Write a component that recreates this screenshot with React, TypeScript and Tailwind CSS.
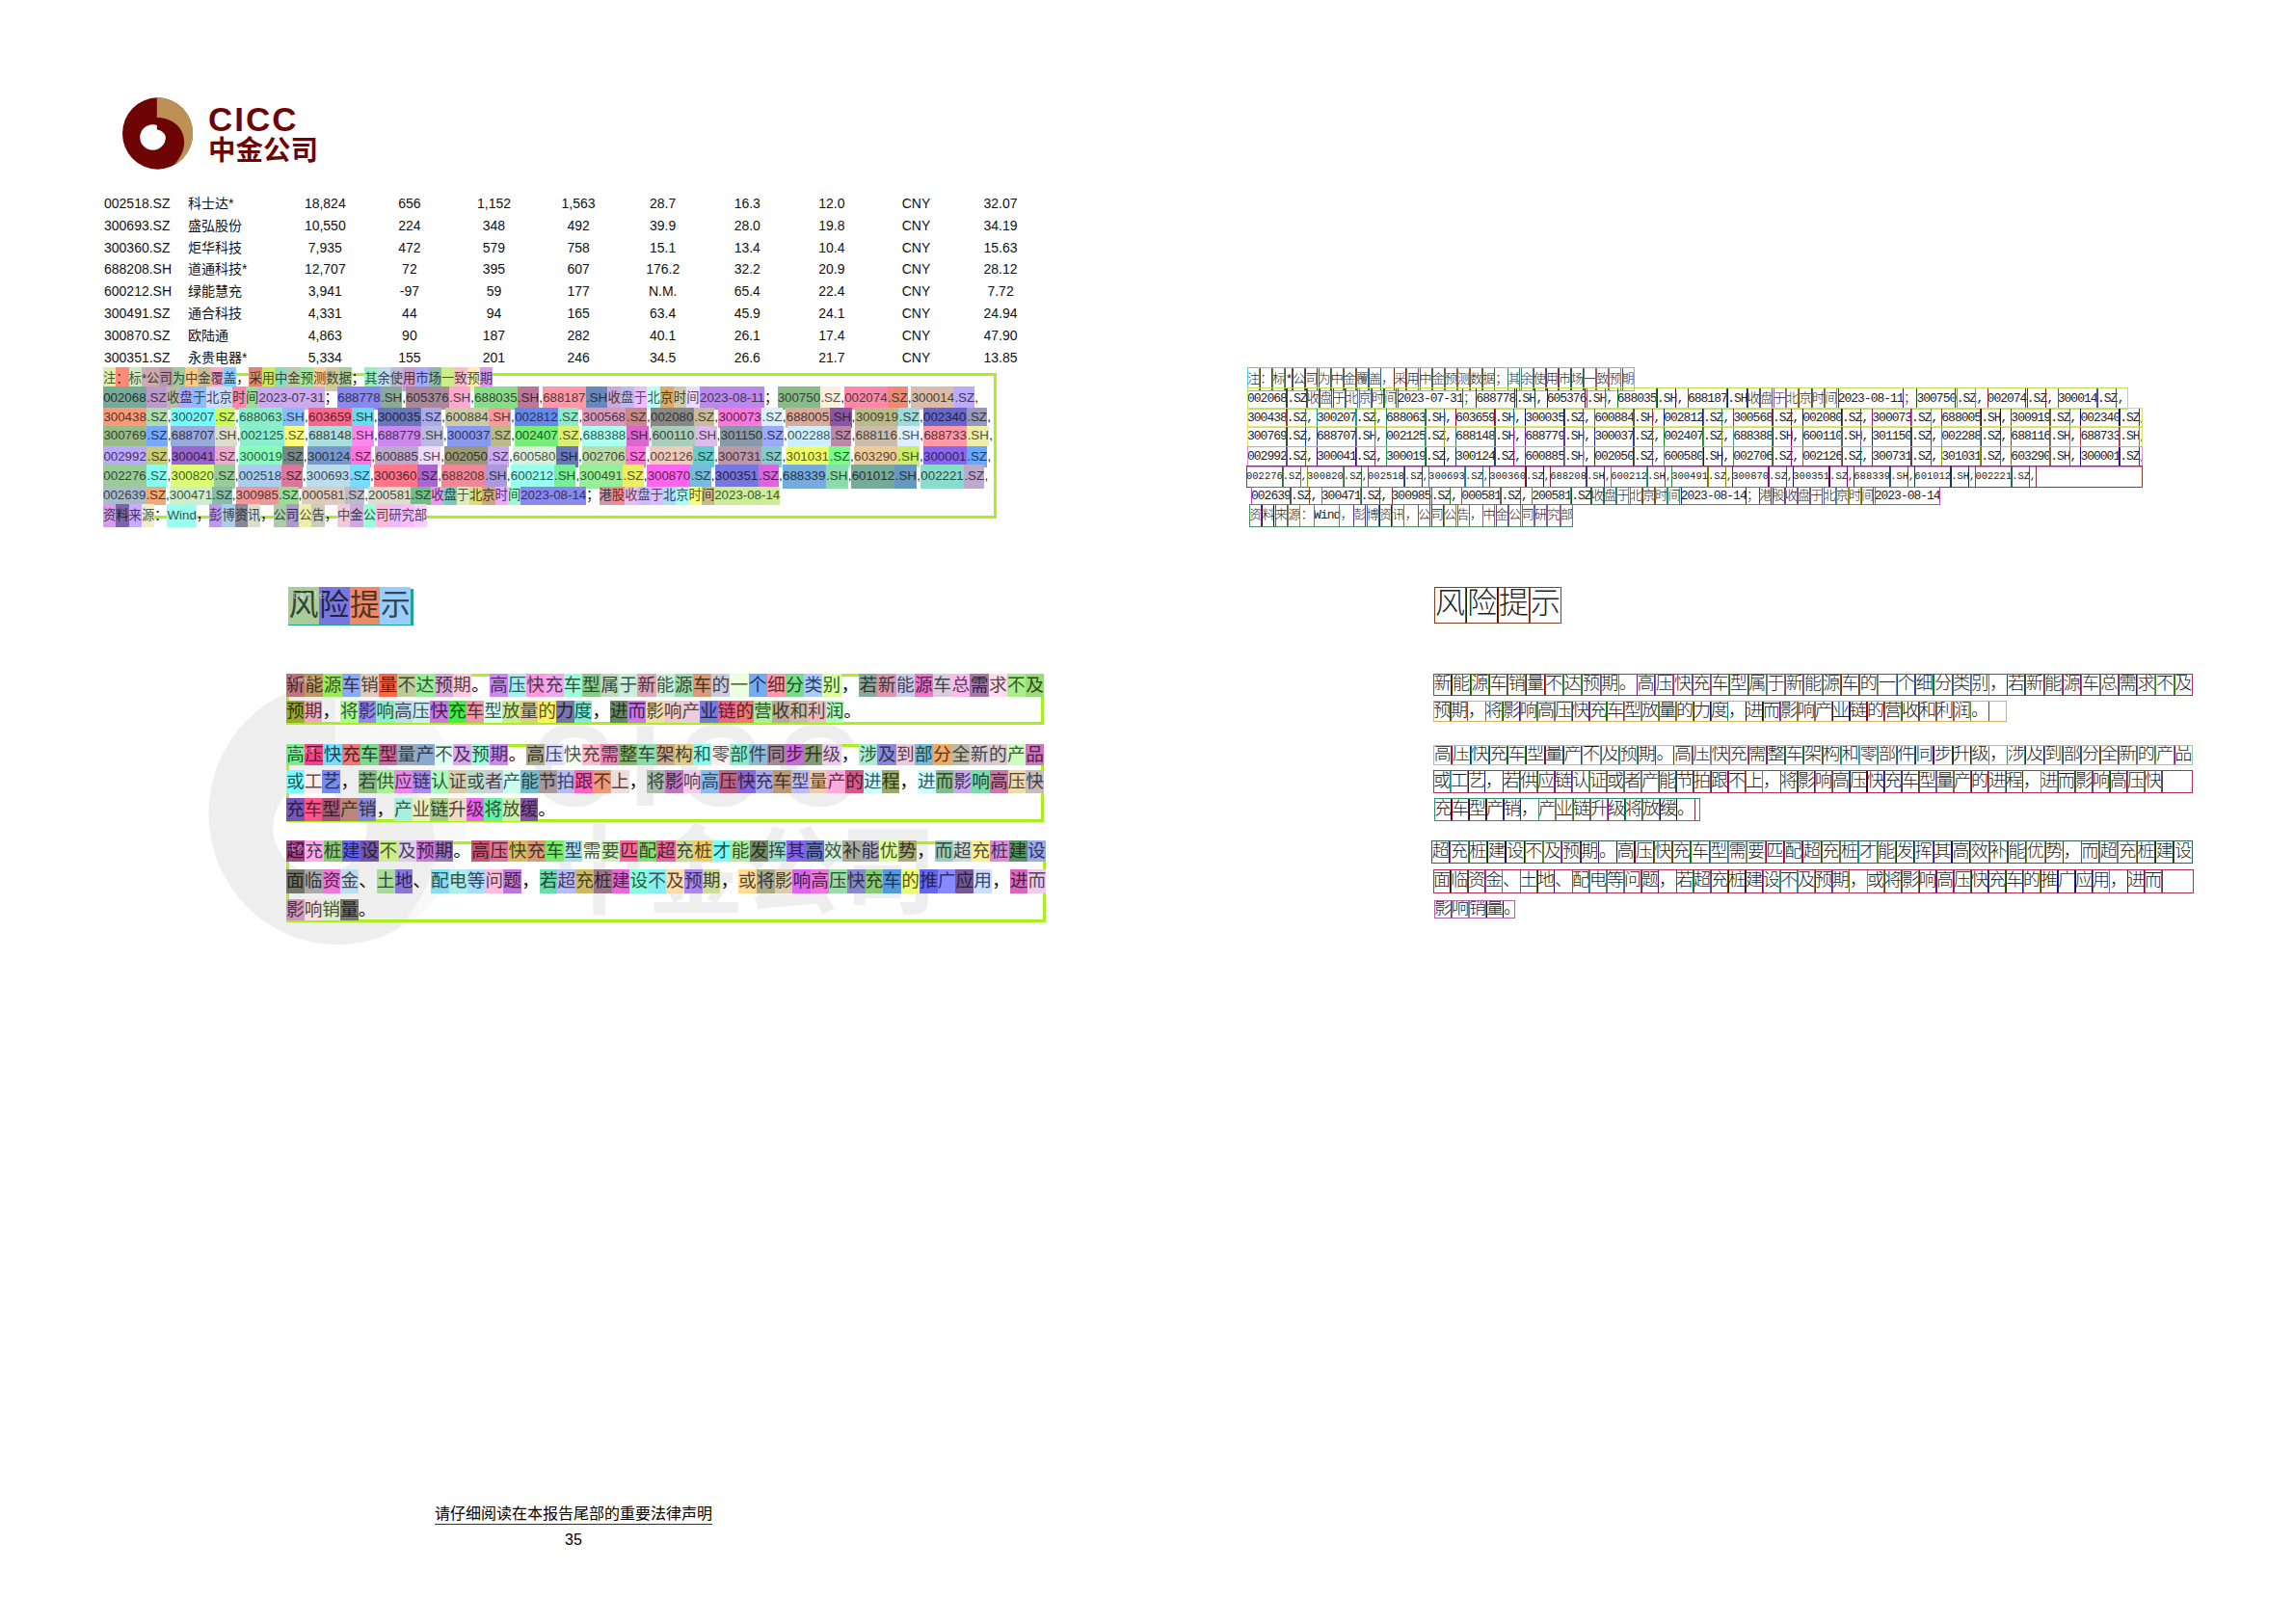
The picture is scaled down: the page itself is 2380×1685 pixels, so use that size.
import React from "react";

const rows = [
  ["002518.SZ", "科士达*", "18,824", "656", "1,152", "1,563", "28.7", "16.3", "12.0", "CNY", "32.07"],
  ["300693.SZ", "盛弘股份", "10,550", "224", "348", "492", "39.9", "28.0", "19.8", "CNY", "34.19"],
  ["300360.SZ", "炬华科技", "7,935", "472", "579", "758", "15.1", "13.4", "10.4", "CNY", "15.63"],
  ["688208.SH", "道通科技*", "12,707", "72", "395", "607", "176.2", "32.2", "20.9", "CNY", "28.12"],
  ["600212.SH", "绿能慧充", "3,941", "-97", "59", "177", "N.M.", "65.4", "22.4", "CNY", "7.72"],
  ["300491.SZ", "通合科技", "4,331", "44", "94", "165", "63.4", "45.9", "24.1", "CNY", "24.94"],
  ["300870.SZ", "欧陆通", "4,863", "90", "187", "282", "40.1", "26.1", "17.4", "CNY", "47.90"],
  ["300351.SZ", "永贵电器*", "5,334", "155", "201", "246", "34.5", "26.6", "21.7", "CNY", "13.85"],
];

// token|colour, colour left out for punctuation that has no box
const note =
  "注|dea ：|f87 标|ceb *|cab 公|caa 司|b9a 为|9c9 中|fc8 金|cb9 覆|fac 盖|8cf ， 采|d87 用|ce5 中|8db 金|bca 预|9e9 测|fc9 数|cc9 据|ac9 ； 其|9eb 余|bde 使|bbd 用|c9c 市|aaf 场|8ba 一|ce8 致|fbc 预|fea 期|d9e";
const code1 =
  "002068|7a9 .SZ|b9c 收|bba 盘|aaf 于|8bf 北|cdf 京|cde 时|f8a 间|9d9 2023-07-31|cae ； 688778|88e .SH|8a9 , 605376|a89 .SH|fac , 688035|8d8 .SH|b79 , 688187|f9a .SH|68b 收|cad 盘|bbe 于|ebf 北|bfe 京|da6 时|cca 间|edf 2023-08-11|b8e ； 300750|8b8 .SZ|fed , 002074|f8a .SZ|e87 , 300014|dba .SZ|baf ,";
const code2 =
  "300438|f97 .SZ|ada , 300207|7ff .SZ|cf5 , 688063|8ec .SH|8bf , 603659|f68 .SH|6de , 300035|67b .SZ|aae , 600884|cca .SH|f99 , 002812|68e .SZ|8ec , 300568|d9b .SZ|c88 , 002080|888 .SZ|cb9 , 300073|f7d .SZ|def , 688005|da9 .SH|85a , 300919|bb8 .SZ|9dd , 002340|66c .SZ|99b ,";
const code3 =
  "300769|9b8 .SZ|7af , 688707|9ad .SH|ddc , 002125|8ec .SZ|ff7 , 688148|add .SH|f8e , 688779|c8e .SH|bbd , 300037|89e .SZ|bb8 , 002407|7e7 .SZ|de7 , 688388|afe .SH|d6c , 600110|acb .SH|dbe , 301150|89a .SZ|9af , 002288|cef .SZ|b8a , 688116|cba .SH|def , 688733|f9a .SH|eea ,";
const code4 =
  "002992|baf .SZ|cc7 , 300041|96c .SZ|eac , 300019|8fb .SZ|788 , 300124|79c .SZ|f7d , 600885|bac .SH|edf , 002050|997 .SZ|cae , 600580|ded .SH|67b , 002706|bda .SZ|f7d , 002126|ecb .SZ|6cc , 300731|b9a .SZ|8cc , 301031|ef6 .SZ|7f8 , 603290|ec9 .SH|ce6 , 300001|86e .SZ|6af ,";
const code5 =
  "002276|9c9 .SZ|8fe , 300820|df7 .SZ|9c9 , 002518|ace .SZ|d79 , 300693|bde .SZ|7df , 300360|f78 .SZ|a6c , 688208|e89 .SH|a9d , 600212|9fe .SH|7e9 , 300491|9e9 .SZ|ee6 , 300870|f6e .SZ|7bd , 300351|77d .SZ|d6d , 688339|7ad .SH|8da , 601012|7a9 .SH|69b , 002221|8dc .SZ|bac ,";
const code6 =
  "002639|abc .SZ|ea7 , 300471|cec .SZ|8ba , 300985|e99 .SZ|9d9 , 000581|dcb .SZ|bbc , 200581|ddc .SZ|7b8 收|e9e 盘|7cb 于|deb 北|dd7 京|ca7 时|eaf 间|9fc 2023-08-14|88e ； 港|c9a 股|f88 收|ebe 盘|cbf 于|dbf 北|adf 京|afe 时|ff7 间|cb8 2023-08-14|ce9";
const source =
  "资|d9e 料|76a 来|caf 源|eec ： Wind|9fe ， 彭|b9e 博|ace 资|889 讯|ddc ， 公|aca 司|a9c 公|eea 告|ccb ， 中|ecd 金|cad 公|9fd 司|fbd 研|ebf 究|fbf 部|fcf";

const title = "风|ac9 险|77d 提|e86 示|9cf";
const p11 =
  "新|b77 能|b96 源|9e5 车|8af 销|dcb 量|f64 不|bc9 达|9e9 预|dad 期|fcd 。 高|c8e 压|aee 快|f9d 充|eae 车|9fd 型|8c8 属|bdb 于|ced 新|dab 能|ced 源|9da 车|d97 的|ccd 一|efd 个|7ae 细|f9a 分|7d8 类|acf 别|df9 ， 若|8a9 新|d9a 能|cce 源|e7c 车|dcd 总|fbe 需|a7a 求|fde 不|ae8 及|9d7";
const p12 =
  "预|9a3 期|eab ， 将|af8 影|98e 响|8ec 高|bde 压|cee 快|c7d 充|4e4 车|e9a 型|dfe 放|ce8 量|dc8 的|fe6 力|77a 度|7ed ， 进|686 而|c7e 影|eda 响|ecc 产|ecd 业|77d 链|e68 的|e77 营|ae9 收|ba9 和|cba 利|ebb 润|afb 。";
const p21 =
  "高|7e8 压|e48 快|7df 充|e77 车|7d8 型|c69 量|9ab 产|8ac 不|dfe 及|dae 预|9fd 期|c8e 。 高|aa8 压|ddf 快|efe 充|fbc 需|e8b 整|8b7 车|8da 架|ca8 构|dc8 和|8fe 零|fee 部|8ec 件|8bd 同|a89 步|c6d 升|897 级|ece ， 涉|aec 及|88d 到|ecd 部|7bd 分|ea6 全|bba 新|dcc 的|dcc 产|cfb 品|c7b";
const p22 =
  "或|7ff 工|fee 艺|78e ， 若|8b8 供|ae9 应|e8e 链|a8e 认|afb 证|dca 或|bdc 者|ccd 产|cfe 能|7bc 节|a99 拍|bbe 跟|f6b 不|e97 上|edd ， 将|aba 影|b7b 响|ece 高|8be 压|b68 快|86d 充|aae 车|b97 型|bbf 量|eca 产|fad 的|d58 进|cff 程|9a6 ， 进|cff 而|8b8 影|cae 响|7da 高|c7a 压|eda 快|cbb";
const p23 =
  "充|75b 车|f58 型|a57 产|b87 销|88d ， 产|aed 业|eeb 链|ac8 升|edb 级|e6e 将|6ea 放|cea 缓|85a 。";
const p31 =
  "超|a48 充|fae 桩|8c7 建|66e 设|75a 不|ce8 及|dce 预|c7d 期|97b 。 高|c57 压|d79 快|db6 充|d97 车|7e6 型|ade 需|efd 要|ceb 匹|f69 配|8d7 超|e69 充|cd9 桩|ec6 才|7ff 能|ae9 发|786 挥|9dc 其|86e 高|67b 效|ced 补|aa9 能|aab 优|df9 势|aa7 ， 而|9cb 超|cdd 充|fe9 桩|d8d 建|596 设|9ae";
const p32 =
  "面|776 临|aaa 资|e7d 金|bde 、 土|ad9 地|87d 、 配|8de 电|aee 等|adf 问|fbd 题|b7d ， 若|6da 超|bbf 充|cb6 桩|978 建|e6d 设|8fd 不|8ee 及|fda 预|a8e 期|cd9 ， 或|fd9 将|aa8 影|dca 响|d6e 高|e7d 压|9da 快|88c 充|8c7 车|59d 的|ef7 推|66e 广|88f 应|759 用|cdf ， 进|d6b 而|ece";
const p33 = "影|c9b 响|fdd 销|dec 量|776 。";

const parse = (s: string) => s.split(" ").map((t) => t.split("|") as [string, string?]);
// glyph colour: the box colour pulled down, since the boxes tint the text in the reference
const tint = (c: string) =>
  "#" + [...c].map((n) => Math.round(parseInt(n, 16) * 0.34).toString(16)).join("");
const edge = (c: string) =>
  "#" + [...c].map((n) => Math.max(0, parseInt(n, 16) - 6).toString(16)).join("");

function BoxLine({ data, cls, grow = true }: { data: string; cls: string; grow?: boolean }) {
  return (
    <div className={`flex items-stretch whitespace-nowrap ${cls}`}>
      {parse(data).map(([t, c], i) => (
        <span
          key={i}
          className={`flex items-center justify-center ${c && grow ? "grow" : ""}`}
          style={{ backgroundColor: c ? "#" + c : undefined, color: c ? tint(c) : undefined }}
        >
          {t}
        </span>
      ))}
    </div>
  );
}

function WireLine({
  data,
  cls,
  color,
  grow = false,
  tail = false,
  tight = false,
}: {
  data: string;
  cls: string;
  color: string;
  grow?: boolean;
  tail?: boolean;
  tight?: boolean;
}) {
  return (
    <div
      className={`flex items-stretch overflow-hidden whitespace-nowrap outline outline-1 -outline-offset-1 ${cls}`}
      style={{ outlineColor: color }}
    >
      {parse(data).map(([t, c], i) => (
        <span
          key={i}
          className={`flex shrink-0 items-center justify-center outline outline-1 -outline-offset-1 ${c && grow ? "grow" : ""} ${
            tight && /^[\x20-\x7e]+$/.test(t) ? "tracking-[-1px]" : ""
          } ${tight && t === "," ? "pr-[4px]" : ""}`}
          style={{ outlineColor: c ? edge(c) : "transparent" }}
        >
          {t}
        </span>
      ))}
      {tail && <span className="grow outline outline-1 -outline-offset-1 outline-[#803040]" />}
    </div>
  );
}

function Tag({ text }: { text: string }) {
  return (
    <span className="absolute left-[1px] top-[-2px] z-10 font-['Liberation_Mono',monospace] text-[10px] leading-[14px] tracking-[1px] text-white/50">
      {text}
    </span>
  );
}

function LogoMark({ dark, gold, cls }: { dark: string; gold: string; cls: string }) {
  return (
    <svg viewBox="0 0 220 224" className={cls}>
      <ellipse cx="110" cy="112" rx="110" ry="112" fill={dark} />
      <path d="M108 0 A110 112 0 0 1 160 212 C200 170 205 120 170 85 C155 70 130 62 108 62 Z" fill={gold} />
      <circle cx="95" cy="124" r="40" fill="#fff" />
      <path d="M108 62 L108 100 Q128 102 136 122 L160 90 Q135 64 108 62 Z" fill={dark} />
    </svg>
  );
}

function LeftPage() {
  return (
    <div className="relative flex h-[1685px] w-[1190px] shrink-0 flex-col font-['Liberation_Sans','Noto_Sans_CJK_SC',sans-serif] text-[#111]">
      {/* watermark sits behind the report text */}
      <LogoMark dark="#eeeeee" gold="#f8f8f8" cls="absolute left-[214px] top-[708px] h-[272px] w-[272px]" />
      <span className="absolute left-[550px] top-[734px] text-[120px] font-bold leading-[120px] tracking-[16px] text-[#eeeeee]">
        CICC
      </span>
      <span className="absolute left-[572px] top-[855px] text-[100px] font-bold leading-[100px] text-[#eeeeee]">
        中金公司
      </span>

      <div className="relative ml-[127px] mt-[101px] flex h-[75px] items-center gap-[16px] text-[#6d0505]">
        <LogoMark dark="#6d0505" gold="#bd9155" cls="h-[75px] w-[73px]" />
        <div className="flex flex-col">
          <span className="text-[35px] font-bold leading-[35px] tracking-[2px]">CICC</span>
          <span className="mt-0 text-[28.5px] font-bold leading-[30px]">中金公司</span>
        </div>
      </div>

      <div className="relative ml-[108px] mt-[24px] text-[14px]">
        {rows.map((r) => (
          <div
            key={r[0]}
            className="grid h-[22.85px] grid-cols-[87px_98.5px_repeat(9,87.6px)] items-center whitespace-nowrap"
          >
            {r.map((v, i) => (
              <span key={i} className={i < 2 ? "text-left" : "text-center"}>
                {v}
              </span>
            ))}
          </div>
        ))}
      </div>

      <div className="relative ml-[107px] mt-[4.2px] h-[151px] w-[927px] border-[3px] border-[#a8f01e] text-[13.3px]">
        <BoxLine data={note} grow={false} cls="-ml-[3px] -mt-[9px] h-[25px] w-fit" />
        <BoxLine data={code1} cls="-ml-[3px] -mt-[5px] h-[24px] w-[908px]" />
        <BoxLine data={code2} cls="-ml-[3px] -mt-[2px] h-[21px] w-[921px]" />
        <BoxLine data={code3} cls="-ml-[3px] -mt-[2px] h-[21px] w-[923px]" />
        <BoxLine data={code4} cls="-ml-[3px] h-[22px] w-[921px]" />
        <BoxLine data={code5} cls="-ml-[3px] -mt-[3px] h-[25px] w-[918px]" />
        <BoxLine data={code6} grow={false} cls="-ml-[3px] -mt-[2px] h-[19px] w-fit" />
        <BoxLine data={source} grow={false} cls="-ml-[3px] -mt-[1px] h-[24px] w-fit" />
      </div>

      <div className="relative ml-[299px] mt-[73px] h-[38px] w-[130px] border-[3px] border-[#1fa58c] text-[31px]">
        <Tag text="title" />
        <BoxLine data={title} cls="-ml-[3px] -mt-[5px] h-[39px] w-[127px]" />
      </div>

      <div className="relative ml-[297px] mt-[50px] h-[53px] w-[786px] border-[3px] border-[#a8f01e] text-[18.67px]">
        <Tag text="text" />
        <BoxLine data={p11} cls="-ml-[3px] -mt-[3px] h-[24px] w-[786px]" />
        <BoxLine data={p12} grow={false} cls="-ml-[3px] mt-[4px] h-[23px] w-fit" />
      </div>

      <div className="relative ml-[297px] mt-[20px] h-[81px] w-[786px] border-[3px] border-[#a8f01e] text-[18.67px]">
        <Tag text="text" />
        <BoxLine data={p21} cls="-ml-[3px] -mt-[3px] h-[22px] w-[786px]" />
        <BoxLine data={p22} cls="-ml-[3px] mt-[5px] h-[24px] w-[786px]" />
        <BoxLine data={p23} grow={false} cls="-ml-[3px] mt-[5px] h-[24px] w-fit" />
      </div>

      <div className="relative ml-[297px] mt-[20px] h-[84px] w-[788px] border-[3px] border-[#a8f01e] text-[18.67px]">
        <Tag text="text" />
        <BoxLine data={p31} cls="-ml-[3px] -mt-[4px] h-[22px] w-[788px]" />
        <BoxLine data={p32} cls="-ml-[3px] mt-[8px] h-[25px] w-[788px]" />
        <BoxLine data={p33} grow={false} cls="-ml-[3px] mt-[6px] h-[22px] w-fit" />
      </div>

      <div className="relative mt-auto flex flex-col items-center pb-[78px] text-black">
        <span className="border-b border-[#333] text-[16px] leading-[20px]">请仔细阅读在本报告尾部的重要法律声明</span>
        <span className="mt-[7px] text-[16px] leading-[18px]">35</span>
      </div>
    </div>
  );
}

function RightPage() {
  return (
    <div className="flex h-[1685px] w-[1190px] shrink-0 flex-col pt-[381px] font-['Liberation_Mono','Noto_Sans_CJK_SC',monospace] font-light text-[#222]">
      <div className="flex flex-col text-[13px]">
        <WireLine data={note} color="#5cc8d8" cls="ml-[104px] h-[25px] w-[402px] justify-between" />
        <WireLine data={code1} tight color="#bde05a" cls="ml-[104px] -mt-[4px] h-[23px] w-[914px] justify-between" />
        <WireLine data={code2} tight color="#e0d860" cls="ml-[104px] -mt-[2px] h-[21px] w-[929px] justify-between" />
        <WireLine data={code3} tight color="#e0e070" cls="ml-[104px] -mt-[2px] h-[22px] w-[929px] justify-between" />
        <WireLine data={code4} tight color="#e090d0" cls="ml-[104px] -mt-[1px] h-[22px] w-[929px] justify-between" />
        <WireLine data={code5} color="#80402a" tail cls="ml-[103px] -mt-[2px] h-[23px] w-[930px] text-[10.5px]" />
        <WireLine data={code6} tight color="#c040c0" cls="ml-[108px] -mt-[1px] h-[19px] w-[715px] justify-between" />
        <WireLine data={source} tight color="#409060" cls="ml-[106px] -mt-[1px] h-[24px] w-[336px] justify-between" />
      </div>

      <WireLine data={title} color="#804020" grow cls="ml-[298px] mt-[62px] h-[38px] w-[132px] text-[31px]" />

      <div className="flex flex-col text-[18px]">
        <WireLine data={p11} color="#b03060" grow cls="ml-[297px] mt-[52px] h-[23px] w-[788px]" />
        <WireLine data={p12} color="#e0b060" tail cls="ml-[297px] mt-[5px] h-[22px] w-[595px]" />
        <WireLine data={p21} color="#90d090" grow cls="ml-[297px] mt-[24px] h-[21px] w-[788px]" />
        <WireLine data={p22} color="#b03050" tail cls="ml-[297px] mt-[5px] h-[24px] w-[788px]" />
        <WireLine data={p23} color="#309070" tail cls="ml-[298px] mt-[5px] h-[24px] w-[276px]" />
        <WireLine data={p31} color="#306060" grow cls="ml-[295px] mt-[20px] h-[24px] w-[790px]" />
        <WireLine data={p32} color="#b03050" tail cls="ml-[297px] mt-[6px] h-[25px] w-[789px]" />
        <WireLine data={p33} color="#b060b0" cls="ml-[298px] mt-[7px] h-[19px] w-[84px]" />
      </div>
    </div>
  );
}

export default function App() {
  return (
    <div className="flex h-[1685px] w-[2380px] overflow-hidden bg-white">
      <LeftPage />
      <RightPage />
    </div>
  );
}
